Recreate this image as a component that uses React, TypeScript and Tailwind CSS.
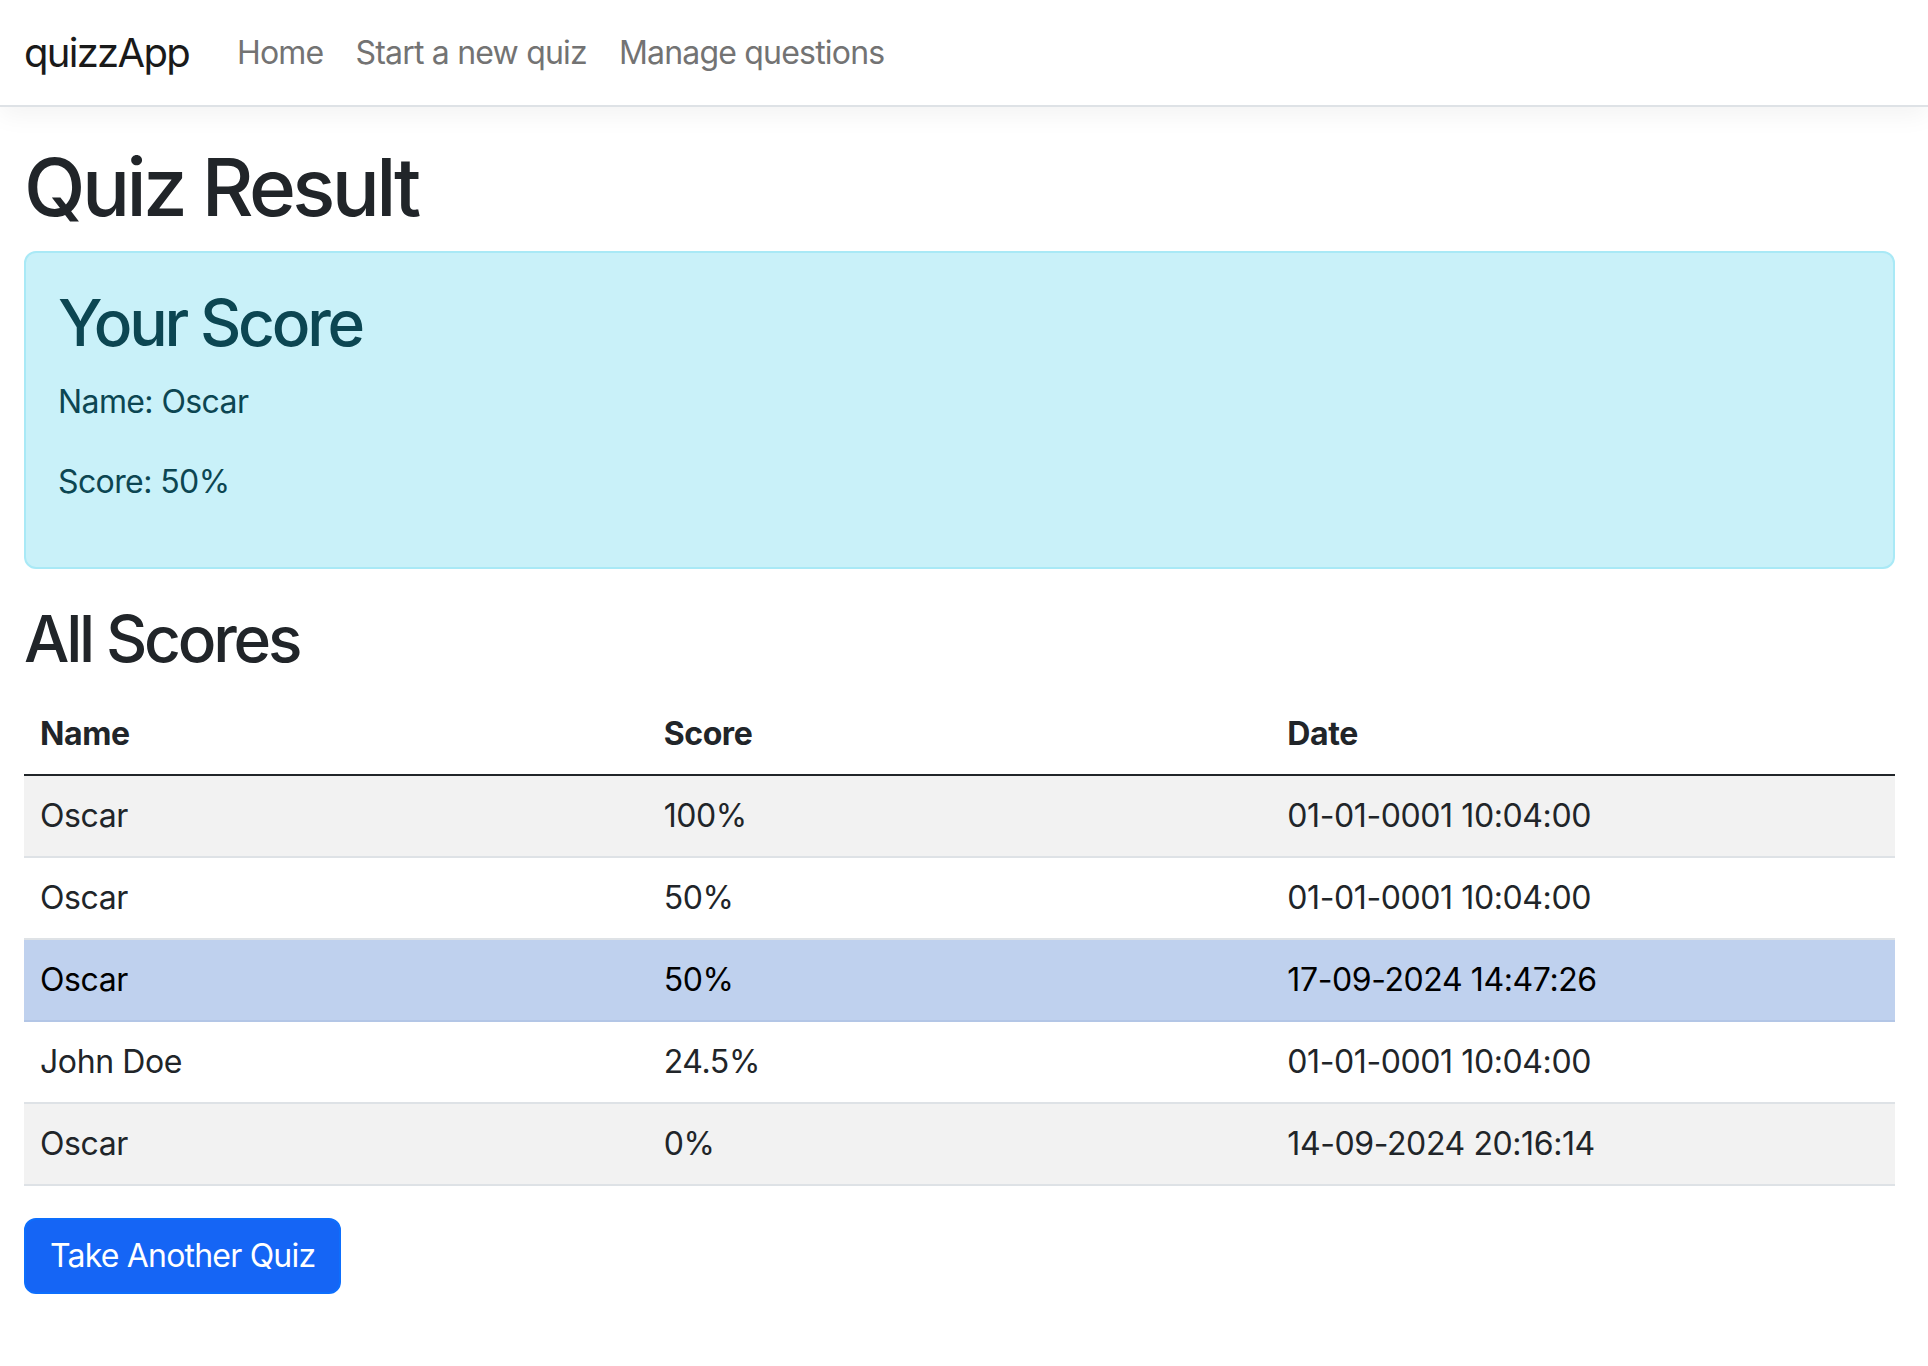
const navLinks = ["Home", "Start a new quiz", "Manage questions"];

interface ScoreRow {
  name: string;
  score: string;
  date: string;
  current?: boolean;
}

const scores: ScoreRow[] = [
  { name: "Oscar", score: "100%", date: "01-01-0001 10:04:00" },
  { name: "Oscar", score: "50%", date: "01-01-0001 10:04:00" },
  { name: "Oscar", score: "50%", date: "17-09-2024 14:47:26", current: true },
  { name: "John Doe", score: "24.5%", date: "01-01-0001 10:04:00" },
  { name: "Oscar", score: "0%", date: "14-09-2024 20:16:14" },
];

export default function App() {
  return (
    <div className="min-h-screen bg-white font-['Inter','Noto_Sans',sans-serif] text-[#212529]">
      <header className="flex h-[107px] items-center border-b-2 border-[#dee2e6] bg-white px-6 shadow-[0_8px_24px_rgba(0,0,0,0.05)]">
        <a className="mr-8 text-[40px] leading-none tracking-[-1.7px] text-[#1a1a1a]">
          quizzApp
        </a>
        <nav className="flex">
          {navLinks.map((link) => (
            <a
              key={link}
              className="px-4 text-[32px] leading-none tracking-[-0.8px] text-[#737373]"
            >
              {link}
            </a>
          ))}
        </nav>
      </header>

      <main className="pt-8 pl-6 pr-[33px]">
        <h1 className="mb-4 text-[80px] font-medium leading-[1.2] tracking-[-3.6px]">
          Quiz Result
        </h1>

        <div className="mb-8 rounded-xl border-2 border-[#a9e9f6] bg-[#c9f1f9] p-8 text-[#0c4652]">
          <h2 className="mb-4 text-[64px] font-medium leading-[1.2] tracking-[-3.2px]">
            Your Score
          </h2>
          <p className="mb-8 text-[32px] leading-[48px] tracking-[-0.6px]">
            Name: Oscar
          </p>
          <p className="mb-[29px] text-[32px] leading-[48px] tracking-[-0.6px]">
            Score: 50%
          </p>
        </div>

        <h2 className="mb-4 text-[64px] font-medium leading-[1.2] tracking-[-3.2px]">
          All Scores
        </h2>

        <table className="mb-8 w-full table-fixed border-collapse text-left text-[32px] leading-[48px] tracking-[-0.4px]">
          <thead>
            <tr className="border-b-2 border-[#212529]">
              <th className="w-1/3 px-4 py-4 font-bold">Name</th>
              <th className="w-1/3 px-4 py-4 font-bold">Score</th>
              <th className="w-1/3 px-4 py-4 font-bold">Date</th>
            </tr>
          </thead>
          <tbody>
            {scores.map((row, i) => (
              <tr
                key={i}
                className={
                  row.current
                    ? "border-b-2 border-[#b3c6e6] bg-[#bfd1ee] text-black"
                    : i % 2 === 0
                      ? "border-b-2 border-[#dee2e6] bg-[#f2f2f2]"
                      : "border-b-2 border-[#dee2e6] bg-white"
                }
              >
                <td className="px-4 py-4">{row.name}</td>
                <td className="px-4 py-4">{row.score}</td>
                <td className="px-4 py-4">{row.date}</td>
              </tr>
            ))}
          </tbody>
        </table>

        <button className="rounded-xl border-2 border-[#0d6efd] bg-[#1565f5] px-6 py-3 text-[32px] leading-[48px] tracking-[-0.8px] text-white">
          Take Another Quiz
        </button>
      </main>
    </div>
  );
}
